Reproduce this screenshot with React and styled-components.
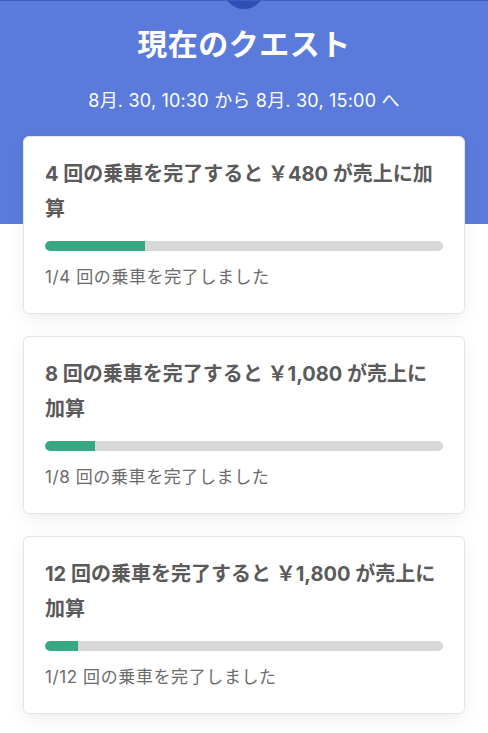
import React from 'react';
import styled, { createGlobalStyle } from 'styled-components';

const blue = '#5a7bdb';
const font = `Inter, "Noto Sans CJK JP", sans-serif`;

const GlobalStyle = createGlobalStyle`
  html, body {
    margin: 0;
    padding: 0;
    background: #fff;
  }
  body {
    font-family: ${font};
  }
  * {
    box-sizing: border-box;
  }
`;

const Page = styled.main`
  position: relative;
  min-height: 733px;
  overflow: hidden;
  border-top: 1px solid #3f5cc0;
  background: linear-gradient(${blue} 0 223px, #fff 223px);
  padding-bottom: 20px;
`;

const Dot = styled.span`
  position: absolute;
  top: -34px;
  left: 50%;
  width: 42px;
  height: 42px;
  margin-left: -21px;
  border-radius: 50%;
  background: #2f4fb6;
`;

const Header = styled.header`
  display: flex;
  flex-direction: column;
  align-items: center;
  padding-top: 22px;
  color: #fff;
`;

const Title = styled.h1`
  margin: 0;
  font-size: 30px;
  line-height: 42px;
  font-weight: 700;
  letter-spacing: 0.5px;
`;

const Period = styled.p`
  margin: 22px 0 0;
  font-size: 18px;
  line-height: 28px;
  font-weight: 400;
  letter-spacing: 0.2px;
`;

const List = styled.section`
  display: flex;
  flex-direction: column;
  gap: 22px;
  width: 442px;
  margin: 21px auto 0;
`;

const Card = styled.article`
  background: #fff;
  border: 1px solid #e4e4e4;
  border-radius: 6px;
  box-shadow: 0 6px 18px rgba(0, 0, 0, 0.07);
  padding: 20px 21px 24px;
`;

const QuestTitle = styled.h2`
  margin: 0;
  font-size: 20px;
  line-height: 35px;
  font-weight: 700;
  color: #5a5a5a;
`;

const Track = styled.div`
  margin-top: 14px;
  height: 10px;
  border-radius: 5px;
  background: #d8d8d8;
  overflow: hidden;
`;

const Fill = styled.div`
  height: 100%;
  border-radius: 5px 0 0 5px;
  background: #36a882;
`;

const Caption = styled.p`
  margin: 14px 0 0;
  font-size: 17px;
  line-height: 24px;
  letter-spacing: 0.6px;
  color: #6b6b6b;
`;

const quests = [
  { rides: 4, amount: '480' },
  { rides: 8, amount: '1,080' },
  { rides: 12, amount: '1,800' },
];

const done = 1;

export default function App() {
  return (
    <>
      <GlobalStyle />
      <Page>
        <Dot />
        <Header>
          <Title>現在のクエスト</Title>
          <Period>8月. 30, 10:30 から 8月. 30, 15:00 へ</Period>
        </Header>
        <List>
          {quests.map((q) => (
            <Card key={q.rides}>
              <QuestTitle>
                {q.rides} 回の乗車を完了すると ￥{q.amount} が売上に加算
              </QuestTitle>
              <Track>
                <Fill style={{ width: `${(done / q.rides) * 100}%` }} />
              </Track>
              <Caption>
                {done}/{q.rides} 回の乗車を完了しました
              </Caption>
            </Card>
          ))}
        </List>
      </Page>
    </>
  );
}
